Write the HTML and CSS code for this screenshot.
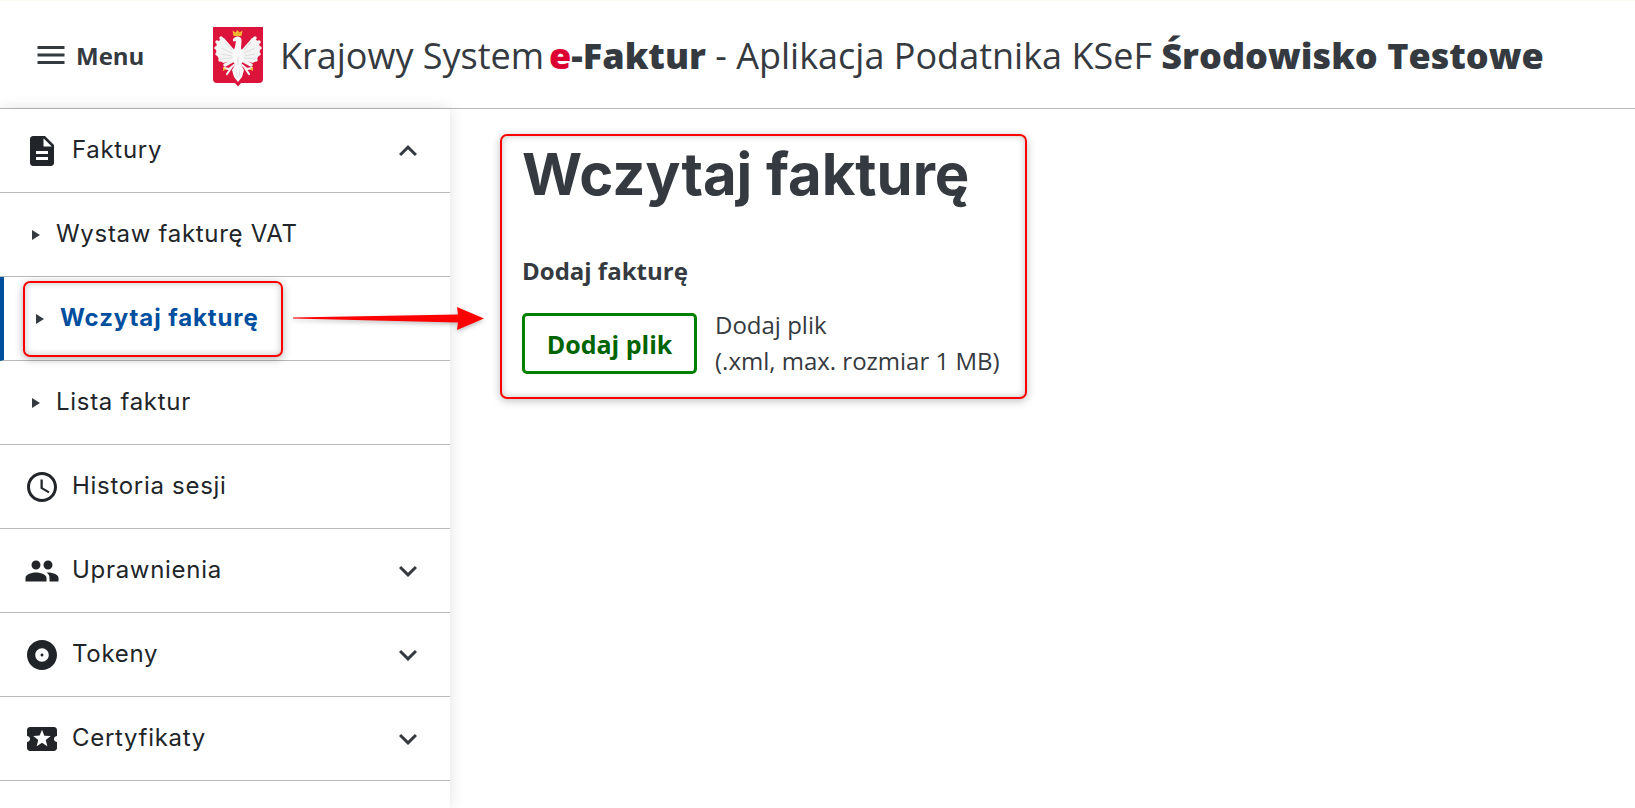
FILE: index.html
```html
<!DOCTYPE html>
<html lang="pl">
<head>
<meta charset="utf-8">
<title>Krajowy System e-Faktur</title>
<link rel="stylesheet" href="styles.css">
</head>
<body>
<header class="topbar">
  <button class="menu-btn" type="button">
    <svg class="ico" viewBox="0 0 24 24"><path d="M3 18h18v-2H3v2zm0-5h18v-2H3v2zm0-7v2h18V6H3z"/></svg>
    <span>Menu</span>
  </button>
  <svg class="emblem" viewBox="0 0 50 60">
    <path class="shield" d="M0 0H50V52Q50 56 46 56H28L25 59.500 22 56H4Q0 56 0 52Z"/>
    <path class="gold" d="M20.500 9L19.500 3.500 22.500 5.500 24.500 3 26.500 5.500 29.500 3.500 28.500 9Z"/>
    <g class="wing">
      <path class="wing-base" d="M21 23L11 11Q3 13 3 22Q3 31 10 36L21 33Z"/>
      <path d="M20 24L8 11M20 25L4 15M20 27L3 21M20 29L4 27M20 31L7 33M21 33L12 38"/>
    </g>
    <g class="wing" transform="matrix(-1 0 0 1 50 0)">
      <path class="wing-base" d="M21 23L11 11Q3 13 3 22Q3 31 10 36L21 33Z"/>
      <path d="M20 24L8 11M20 25L4 15M20 27L3 21M20 29L4 27M20 31L7 33M21 33L12 38"/>
    </g>
    <path class="bird" d="M20 12Q22 9 25 9.500Q29 10 28.500 14L28 21Q31 26 30 34L28 38 31 43 29 50 25 55 21 50 19 43 22 38 20 34Q19 26 22 20L23 14 20 14.500Z"/>
    <path class="leg" d="M21 38L16 42 11 41M29 38L34 42 39 41M18 41L14 47M32 41L36 47"/>
    <path class="gold" d="M10 39.500L13 42.500 10 44ZM40 39.500L37 42.500 40 44Z"/>
    <path class="feather" d="M12 15L19 23M8 21L19 26M8 27L19 29M7 32L19 31M38 15L31 23M42 21L31 26M42 27L31 29M43 32L31 31M25 30V38M23 42L24 50M27 42L26 50"/>
  </svg>
  <h2 class="site-title">Krajowy System<span class="brand"><b class="red">e</b><b>-Faktur</b></span> - Aplikacja Podatnika KSeF <b class="env">Środowisko Testowe</b></h2>
</header>
<div class="layout">
  <nav class="sidebar">
    <a class="row"><svg class="ico lead" viewBox="0 0 24 24"><path d="M14 2H6c-1.100 0-2 .9-2 2v16c0 1.100.9 2 2 2h12c1.100 0 2-.9 2-2V8l-6-6zm2 16H8v-2h8v2zm0-4H8v-2h8v2zm-3-5V3.500L18.500 9H13z"/></svg><span class="label">Faktury</span><svg class="ico chev" viewBox="0 0 24 24"><path d="M12 8l-6 6 1.410 1.410L12 10.830l4.590 4.580L18 14z"/></svg></a>
    <a class="row sub"><i class="tri"></i><span class="label">Wystaw fakturę VAT</span></a>
    <a class="row sub active"><span class="callout"><i class="tri"></i><span class="label">Wczytaj fakturę</span></span></a>
    <a class="row sub"><i class="tri"></i><span class="label">Lista faktur</span></a>
    <a class="row"><svg class="ico lead" viewBox="0 0 24 24"><path d="M11.990 2C6.470 2 2 6.480 2 12s4.470 10 9.990 10C17.520 22 22 17.520 22 12S17.520 2 11.990 2zM12 20c-4.420 0-8-3.580-8-8s3.580-8 8-8 8 3.580 8 8-3.580 8-8 8zm.5-13H11v6l5.250 3.150.75-1.230-4.500-2.670z"/></svg><span class="label">Historia sesji</span></a>
    <a class="row"><svg class="ico lead" viewBox="0 0 24 24"><path d="M16 11c1.660 0 2.990-1.340 2.990-3S17.660 5 16 5c-1.660 0-3 1.340-3 3s1.340 3 3 3zm-8 0c1.660 0 2.990-1.340 2.990-3S9.660 5 8 5C6.340 5 5 6.340 5 8s1.340 3 3 3zm0 2c-2.330 0-7 1.170-7 3.500V19h14v-2.500c0-2.330-4.670-3.500-7-3.500zm8 0c-.29 0-.62.02-.97.05 1.160.84 1.970 1.970 1.970 3.450V19h6v-2.500c0-2.330-4.670-3.500-7-3.500z"/></svg><span class="label">Uprawnienia</span><svg class="ico chev" viewBox="0 0 24 24"><path d="M16.590 8.590L12 13.170 7.410 8.590 6 10l6 6 6-6z"/></svg></a>
    <a class="row"><svg class="ico lead" viewBox="0 0 24 24"><path d="M12 2C6.480 2 2 6.480 2 12s4.480 10 10 10 10-4.480 10-10S17.520 2 12 2zm0 14.500c-2.490 0-4.500-2.010-4.500-4.500S9.510 7.500 12 7.500s4.500 2.010 4.500 4.500-2.010 4.500-4.500 4.500zm0-5.500c-.55 0-1 .45-1 1s.45 1 1 1 1-.45 1-1-.45-1-1-1z"/></svg><span class="label">Tokeny</span><svg class="ico chev" viewBox="0 0 24 24"><path d="M16.590 8.590L12 13.170 7.410 8.590 6 10l6 6 6-6z"/></svg></a>
    <a class="row"><svg class="ico lead" viewBox="0 0 24 24"><path d="M20 12c0-1.100.9-2 2-2V6c0-1.100-.9-2-2-2H4c-1.100 0-1.990.9-1.990 2v4c1.100 0 1.990.9 1.990 2s-.89 2-2 2v4c0 1.100.9 2 2 2h16c1.100 0 2-.9 2-2v-4c-1.100 0-2-.9-2-2zm-4.420 4.800L12 14.500l-3.580 2.300 1.080-4.120-3.290-2.690 4.240-.25L12 5.800l1.540 3.950 4.240.25-3.290 2.690 1.090 4.110z"/></svg><span class="label">Certyfikaty</span><svg class="ico chev" viewBox="0 0 24 24"><path d="M16.590 8.590L12 13.170 7.410 8.590 6 10l6 6 6-6z"/></svg></a>
  </nav>
  <main class="content">
    <section class="panel">
      <h1 class="title">Wczytaj fakturę</h1>
      <p class="field-label">Dodaj fakturę</p>
      <div class="upload">
        <button class="upload-btn" type="button">Dodaj plik</button>
        <p class="hint">Dodaj plik<br>(.xml, max. rozmiar 1 MB)</p>
      </div>
    </section>
  </main>
</div>
<svg class="arrow" viewBox="0 0 192 26"><path d="M0 11.500L165 8.500 164 1 191 12.500 164 24 165 16.500 0 12.500Z"/></svg>
</body>
</html>
```
FILE: styles.css
```css
* { box-sizing: border-box; }
html, body { height: 100%; }
body {
  margin: 0;
  background: #fff;
  color: #343a40;
  font-family: "Open Sans", sans-serif;
  overflow: hidden;
  position: relative;
}
.topbar {
  height: 109px;
  display: flex;
  align-items: center;
  border-top: 1px solid #fbfbf2;
  border-bottom: 1px solid #b9b9b9;
  padding-left: 33px;
  padding-top: 1px;
}
.ico { width: 36px; height: 36px; fill: currentColor; flex: none; }
.menu-btn {
  display: flex;
  align-items: center;
  gap: 7px;
  width: 180px;
  padding: 0;
  border: 0;
  background: none;
  color: #343a40;
  font: 700 24px "Open Sans", sans-serif;
}
.emblem { width: 50px; height: 60px; flex: none; margin: 4px 17px 0 0; }
.shield { fill: #dc143c; }
.gold { fill: #f2b632; }
.wing { fill: none; stroke: #f4f4f4; stroke-width: 3.4; stroke-linecap: round; }
.wing-base { fill: #f4f4f4; stroke: none; }
.bird { fill: #fafafa; }
.leg { fill: none; stroke: #f4f4f4; stroke-width: 2.200; stroke-linecap: round; }
.feather { fill: none; stroke: #cfcfcf; stroke-width: .6; }
.site-title { margin: 0; font-size: 36px; font-weight: 400; white-space: nowrap; }
.site-title b { font-weight: 800; }
.brand { margin-left: 5px; }
.red { color: #dc0032; }
.layout { display: flex; height: calc(100% - 109px); }
.sidebar {
  width: 450px;
  flex: none;
  background: #fff;
  box-shadow: 0 0 14px rgba(0,0,0,.12);
  font-family: Inter, sans-serif;
  color: #212529;
}
.row {
  height: 84px;
  display: flex;
  align-items: center;
  border-bottom: 1px solid #b9b9b9;
  padding: 0 24px;
  font-size: 24px;
  letter-spacing: .7px;
}
.lead { margin-right: 12px; }
.chev { margin-left: auto; color: #343a40; }
.row .label { white-space: nowrap; margin-top: -2px; }
.sub { padding-left: 32px; }
.tri {
  width: 0; height: 0;
  border-left: 8px solid #343a40;
  border-top: 5px solid transparent;
  border-bottom: 5px solid transparent;
  margin-right: 16px;
  flex: none;
}
.active {
  border-left: 4px solid #004f9f;
  padding-left: 19px;
  color: #004f9f;
  font-weight: 700;
  letter-spacing: .9px;
}
.callout {
  display: flex;
  align-items: center;
  width: 260px;
  height: 76px;
  padding-left: 11px;
  border: 2px solid #f00;
  border-radius: 7px;
  box-shadow: 0 2px 8px rgba(0,0,0,.3), inset 0 0 7px rgba(0,0,0,.24);
}
.content { flex: 1; padding: 25px 0 0 50px; }
.panel {
  width: 527px;
  height: 265px;
  border: 2px solid #f00;
  border-radius: 7px;
  padding: 0 20px;
  box-shadow: 0 2px 8px rgba(0,0,0,.25), inset 0 0 7px rgba(0,0,0,.24);
}
.title { margin: 0; font: 700 58px/76px Inter, sans-serif; color: #343a40; white-space: nowrap; }
.field-label { margin: 44px 0 0; font-size: 24px; font-weight: 700; line-height: 30px; }
.upload { display: flex; margin-top: 27px; }
.upload-btn {
  width: 175px;
  height: 61px;
  border: 3px solid #008000;
  border-radius: 5px;
  background: #fff;
  color: #006400;
  font: 700 25px "Open Sans", sans-serif;
  padding: 0;
  flex: none;
}
.hint { margin: -6px 0 0 18px; font-size: 24px; line-height: 36px; white-space: nowrap; }
.arrow {
  position: absolute;
  left: 293px;
  top: 306px;
  width: 192px;
  height: 26px;
  fill: #f00;
  filter: drop-shadow(0 2px 2px rgba(0,0,0,.25));
}
```
